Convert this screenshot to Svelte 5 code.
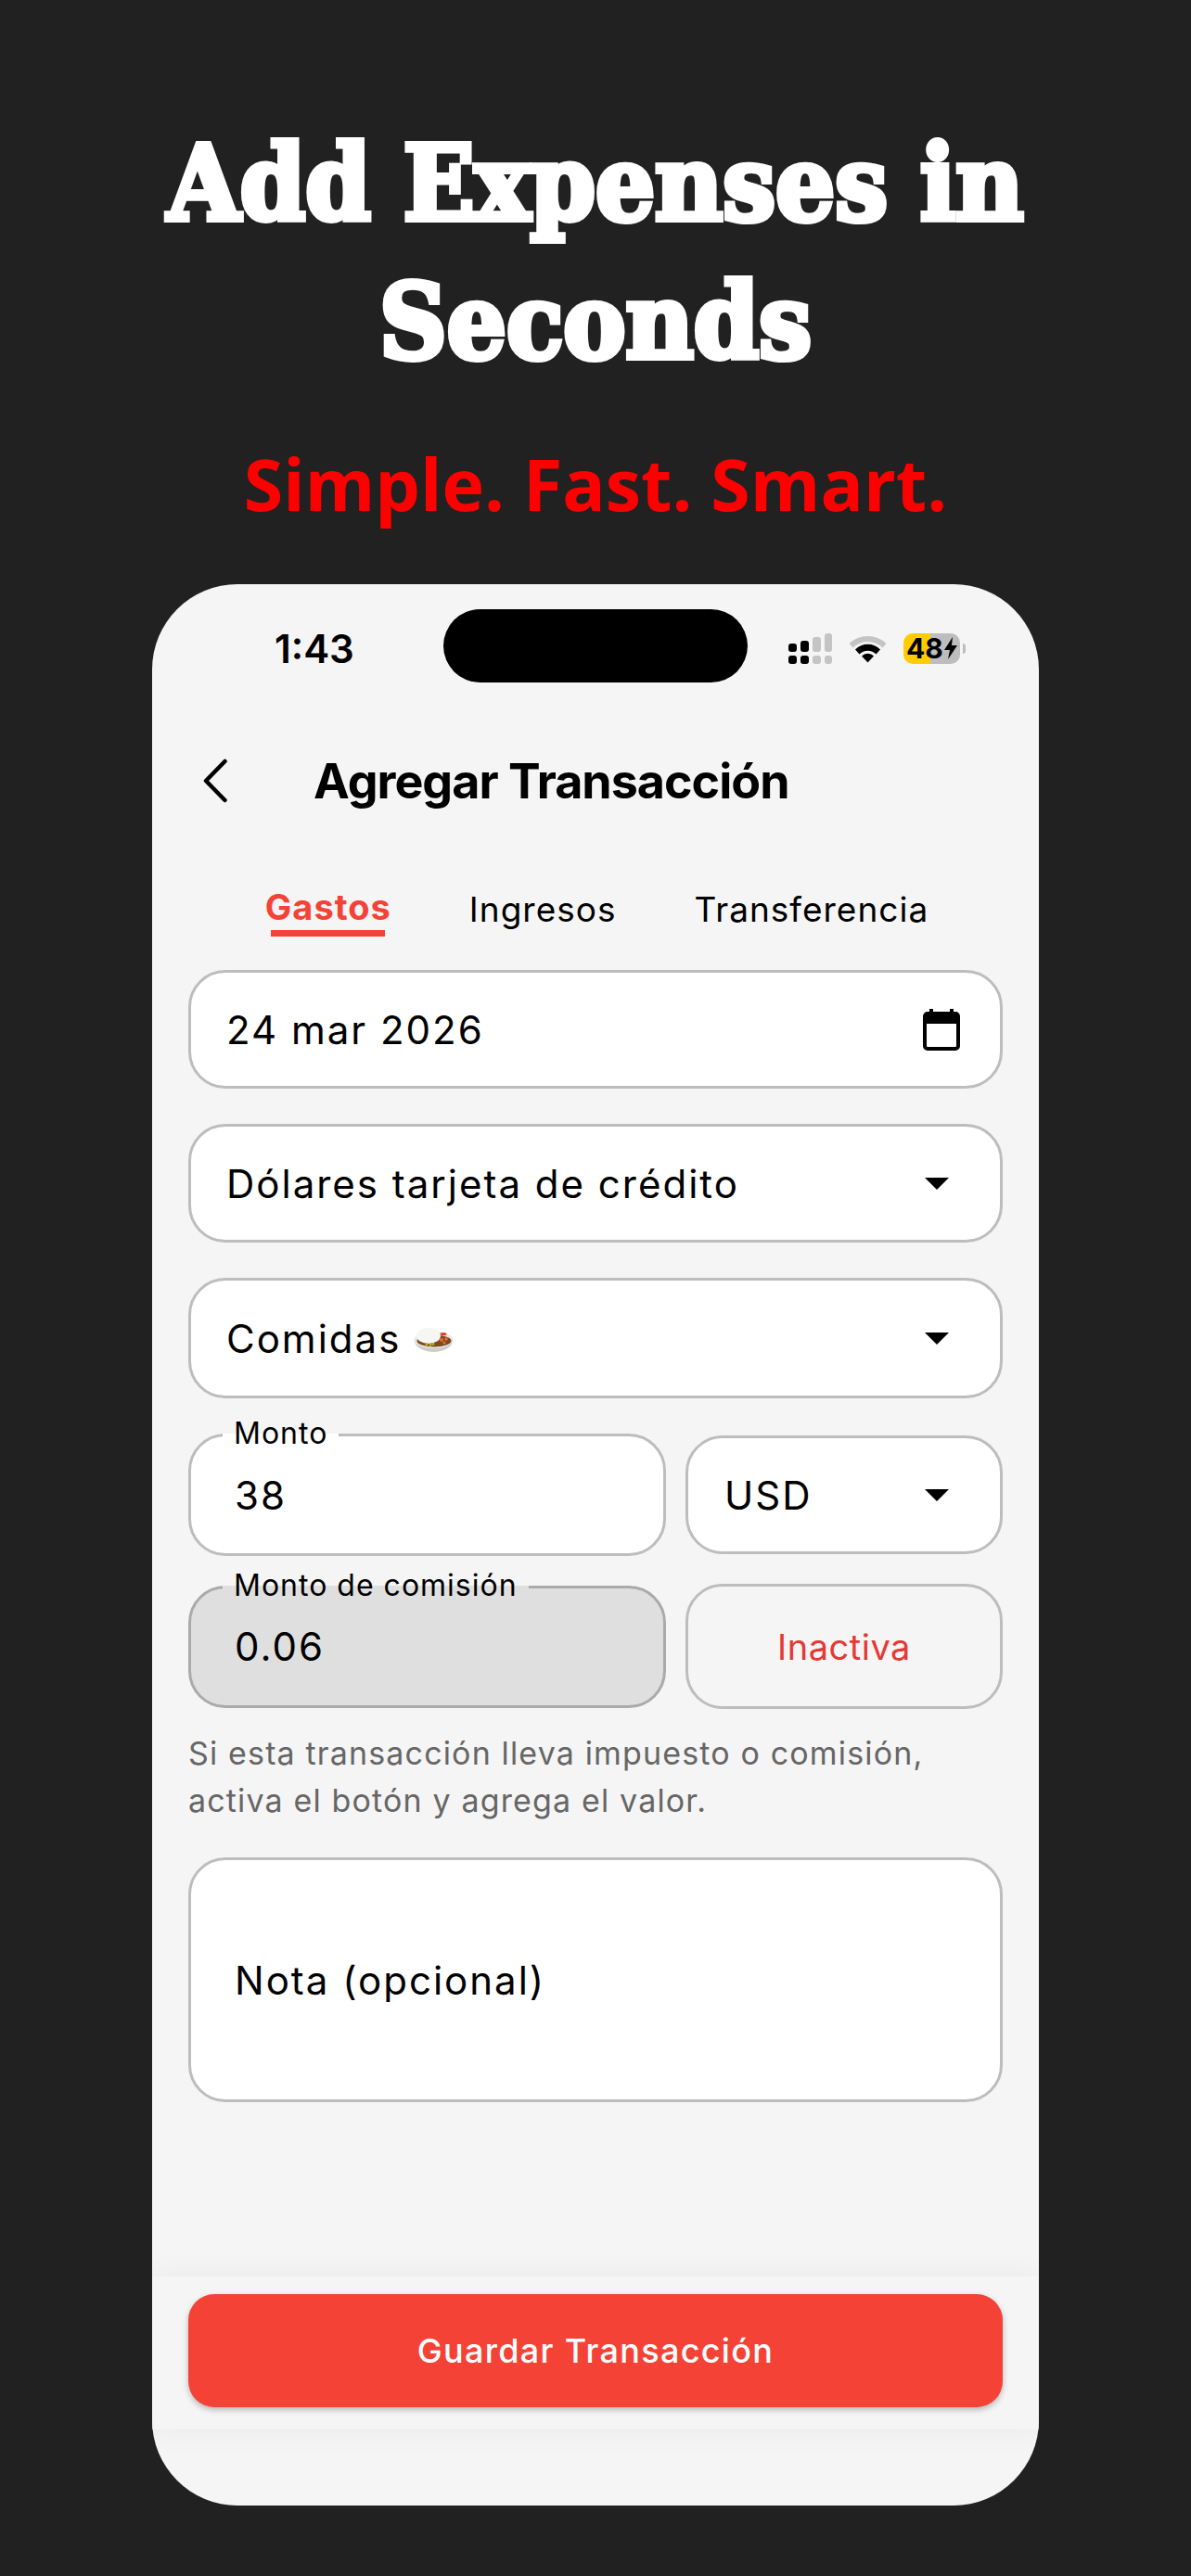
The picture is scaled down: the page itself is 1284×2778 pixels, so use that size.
<script>
	const tabs = [
		{ name: 'Gastos', active: true },
		{ name: 'Ingresos', active: false },
		{ name: 'Transferencia', active: false },
	]
</script>

<main class="page">
	<header class="promo">
		<h1>Add Expenses in<br />Seconds</h1>
		<p>Simple. Fast. Smart.</p>
	</header>

	<section class="phone">
		<div class="status">
			<span class="time">1:43</span>
			<div class="island"></div>
			<div class="status-icons">
				<svg width="47" height="33" viewBox="0 0 47 33">
					<rect x="0" y="11" width="9" height="9" rx="3" fill="#000" />
					<rect x="13" y="8" width="9" height="12" rx="3" fill="#000" />
					<rect x="26" y="4" width="9" height="16" rx="3" fill="#c4c4c4" />
					<rect x="39" y="0" width="8" height="20" rx="3" fill="#c4c4c4" />
					<rect x="0" y="24" width="9" height="9" rx="3" fill="#000" />
					<rect x="13" y="24" width="9" height="9" rx="3" fill="#000" />
					<rect x="26" y="24" width="9" height="9" rx="3" fill="#c4c4c4" />
					<rect x="39" y="24" width="8" height="9" rx="3" fill="#c4c4c4" />
				</svg>
				<svg width="41" height="32" viewBox="0 0 41 32">
					<path d="M0.500 11 A29 29 0 0 1 40.500 11 L36.500 15.500 A23 23 0 0 0 4.500 15.500 Z" fill="#c4c4c4" />
					<path d="M7 17.500 A19 19 0 0 1 34 17.500 L29.500 22.500 A12.500 12.500 0 0 0 11.500 22.500 Z" fill="#000" />
					<path d="M14 24.500 A9 9 0 0 1 27 24.500 L20.500 31.500 Z" fill="#000" />
				</svg>
				<div class="battery">
					<div class="battery-body">
						<span>48</span>
						<svg width="14" height="24" viewBox="0 0 14 24"><path d="M9 0 L0 14 H6 L4 24 L14 9 H8 Z" fill="#000" /></svg>
					</div>
					<div class="battery-nub"></div>
				</div>
			</div>
		</div>

		<div class="topbar">
			<svg class="back" width="28" height="48" viewBox="0 0 28 48">
				<path d="M24.500 3 L4 24 L24.500 45" fill="none" stroke="#000" stroke-width="4.500" stroke-linecap="round" stroke-linejoin="round" />
			</svg>
			<h2>Agregar Transacción</h2>
		</div>

		<nav class="tabs">
			{#each tabs as t}
				<span class="tab" class:active={t.active}>{t.name}</span>
			{/each}
		</nav>

		<div class="form">
			<div class="field">
				<span>24 mar 2026</span>
				<svg class="calendar" width="40" height="45" viewBox="0 0 40 45">
					<path d="M9 0 V6 M31 0 V6" stroke="#000" stroke-width="4" />
					<rect x="2" y="5" width="36" height="38" rx="3" fill="#fff" stroke="#000" stroke-width="4" />
					<rect x="2" y="5" width="36" height="11" fill="#000" />
				</svg>
			</div>

			<div class="field">
				<span>Dólares tarjeta de crédito</span>
				<div class="caret"></div>
			</div>

			<div class="field tall">
				<span class="with-emoji">
					Comidas
					<svg class="emoji" width="43" height="26" viewBox="0 0 43 26">
						<path d="M0.500 13 C1 21 11 26 21.500 26 C32 26 42 21 42.500 13 Z" fill="#cfccc6" />
						<ellipse cx="21.500" cy="13" rx="21" ry="9" fill="#e9e7e2" />
						<ellipse cx="22" cy="14" rx="18.500" ry="6.500" fill="#7a4a22" />
						<ellipse cx="16" cy="8.500" rx="13" ry="8.500" fill="#f6f6f3" />
						<ellipse cx="32" cy="6.500" rx="3.500" ry="1.500" fill="#e8392a" />
						<circle cx="30" cy="13" r="2" fill="#ee6a2b" />
						<circle cx="35" cy="12" r="1.800" fill="#ee6a2b" />
						<circle cx="33" cy="16" r="1.600" fill="#ee6a2b" />
						<circle cx="14" cy="18" r="1.400" fill="#b7b52e" />
						<circle cx="18" cy="18.500" r="1.400" fill="#b7b52e" />
						<circle cx="21" cy="17.500" r="1.400" fill="#b7b52e" />
					</svg>
				</span>
				<div class="caret"></div>
			</div>

			<div class="amount-row">
				<div class="field amount">
					<label for="monto">Monto</label>
					<span id="monto">38</span>
				</div>
				<div class="field currency">
					<span>USD</span>
					<div class="caret"></div>
				</div>
			</div>

			<div class="amount-row second">
				<div class="field amount disabled">
					<label for="comision">Monto de comisión</label>
					<span id="comision">0.06</span>
				</div>
				<div class="field toggle">Inactiva</div>
			</div>

			<p class="help">Si esta transacción lleva impuesto o comisión,<br />activa el botón y agrega el valor.</p>

			<div class="field note"><span>Nota (opcional)</span></div>
		</div>

		<div class="bottom-bar">
			<button class="save">Guardar Transacción</button>
		</div>
	</section>
</main>

<style>
	:global(body) {
		background: #212121;
	}
	.page {
		height: 2778px;
		background: #212121;
		overflow: hidden;
		font-family: Inter, sans-serif;
	}
	.promo {
		text-align: center;
		padding-top: 123px;
	}
	.promo h1 {
		margin: 0;
		color: #fff;
		font-family: "DejaVu Serif", serif;
		font-stretch: condensed;
		font-weight: 700;
		font-size: 112px;
		line-height: 149px;
		-webkit-text-stroke: 6px #fff;
	}
	.promo p {
		margin: 48px 0 0;
		color: #f00;
		font-family: "Open Sans", sans-serif;
		font-weight: 700;
		font-size: 77px;
		line-height: 105px;
	}
	.phone {
		width: 956px;
		height: 2072px;
		margin: 56px auto 0;
		background: #f5f5f5;
		border-radius: 92px;
		overflow: hidden;
		display: flex;
		flex-direction: column;
	}
	.status {
		display: grid;
		grid-template-columns: 314px 328px 314px;
		align-items: center;
		padding-top: 27px;
	}
	.time {
		padding: 6px 0 0 132px;
		font-weight: 600;
		font-size: 42px;
		line-height: 73px;
		color: #000;
	}
	.island {
		height: 79px;
		background: #000;
		border-radius: 40px;
	}
	.status-icons {
		display: flex;
		align-items: center;
		gap: 18px;
		padding: 5px 0 0 44px;
	}
	.battery {
		display: flex;
		align-items: center;
		gap: 3px;
	}
	.battery-body {
		width: 61px;
		height: 33px;
		border-radius: 10px;
		background: linear-gradient(90deg, #fc0 0 29px, #bdbdbd 29px);
		display: flex;
		align-items: center;
		justify-content: center;
		gap: 1px;
		font-weight: 700;
		font-size: 30px;
		color: #000;
	}
	.battery-nub {
		width: 3px;
		height: 11px;
		background: #bdbdbd;
		border-radius: 0 3px 3px 0;
	}
	.topbar {
		display: flex;
		align-items: center;
		height: 66px;
		margin-top: 73px;
		padding-left: 54px;
	}
	.topbar h2 {
		margin: 0 0 0 92px;
		font-weight: 700;
		font-size: 52px;
		letter-spacing: -1px;
		color: #000;
	}
	.back {
		flex: none;
	}
	.tabs {
		display: flex;
		justify-content: center;
		gap: 84px;
		margin-top: 82px;
		padding-left: 3px;
		height: 47px;
	}
	.tab {
		font-size: 37px;
		letter-spacing: 1px;
		color: #000;
		line-height: 47px;
		position: relative;
	}
	.tab.active {
		color: #f44336;
		font-weight: 700;
		font-size: 38px;
		top: -2px;
	}
	.tab.active::after {
		content: "";
		position: absolute;
		left: 6px;
		right: 7px;
		bottom: -8px;
		height: 7px;
		background: #f44336;
	}
	.form {
		display: flex;
		flex-direction: column;
		gap: 38px;
		margin: 42px 39px 0;
	}
	.field {
		position: relative;
		box-sizing: border-box;
		height: 128px;
		display: flex;
		align-items: center;
		justify-content: space-between;
		padding: 0 55px 0 38px;
		background: #fff;
		border: 3px solid #bdbdbd;
		border-radius: 40px;
		font-size: 42px;
		letter-spacing: 2px;
		color: #000;
	}
	.field.tall {
		height: 130px;
	}
	.calendar {
		margin-right: -12px;
	}
	.with-emoji {
		display: flex;
		align-items: center;
		gap: 14px;
	}
	.emoji {
		margin-top: 4px;
	}
	.caret {
		width: 0;
		height: 0;
		border-left: 13px solid transparent;
		border-right: 13px solid transparent;
		border-top: 13px solid #000;
	}
	.amount-row {
		display: flex;
		align-items: center;
		gap: 21px;
	}
	.amount-row.second {
		margin-top: -8px;
	}
	.amount {
		flex: none;
		width: 515px;
		height: 132px;
		padding-left: 47px;
	}
	.disabled {
		background: #dfdfdf;
		border-color: #aaa;
	}
	.amount label {
		position: absolute;
		left: 34px;
		top: -19px;
		padding: 0 12px;
		font-size: 32px;
		line-height: 32px;
		letter-spacing: 1px;
		background: linear-gradient(#f5f5f5 50%, #fff 50%);
	}
	.disabled label {
		background: linear-gradient(#f5f5f5 50%, #dfdfdf 50%);
	}
	.currency {
		flex: 1;
		padding: 0 55px 0 39px;
	}
	.toggle {
		flex: 1;
		height: 135px;
		justify-content: center;
		padding: 0;
		background: transparent;
		font-size: 38px;
		letter-spacing: 0.500px;
		color: #e53935;
	}
	.help {
		margin: -16px 0 -2px;
		font-size: 34px;
		line-height: 51px;
		letter-spacing: 1.150px;
		color: #666;
	}
	.note {
		height: 264px;
		padding-left: 47px;
	}
	.bottom-bar {
		margin-top: auto;
		margin-bottom: 82px;
		padding: 19px 39px 24px;
		background: #f5f5f5;
		box-shadow: 0 0 30px rgba(0, 0, 0, 0.06);
	}
	.save {
		display: block;
		width: 100%;
		height: 122px;
		border: 0;
		border-radius: 28px;
		background: #f44336;
		box-shadow: 0 3px 6px rgba(0, 0, 0, 0.25);
		font-family: inherit;
		font-weight: 500;
		font-size: 36px;
		letter-spacing: 1.300px;
		color: #fff;
	}
</style>
